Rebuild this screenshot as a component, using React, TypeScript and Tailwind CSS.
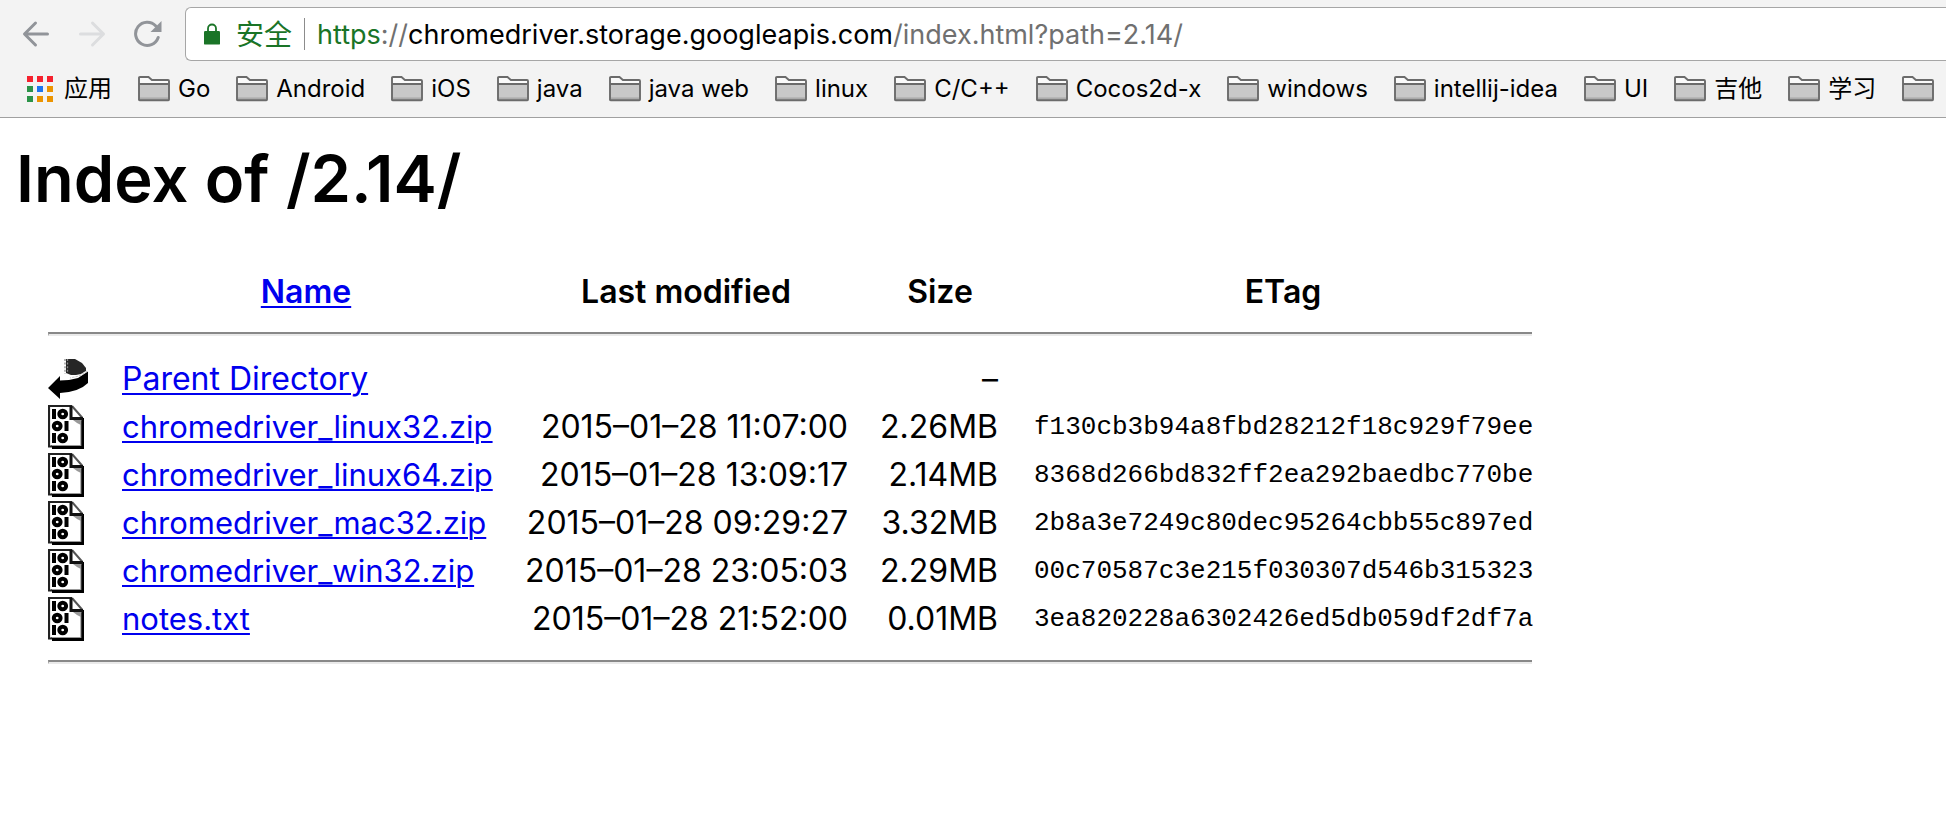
import React from "react";

const bookmarks = ["Go", "Android", "iOS", "java", "java web", "linux", "C/C++", "Cocos2d-x", "windows", "intellij-idea", "UI", "吉他", "学习", ""];

const files = [
  { name: "chromedriver_linux32.zip", modified: "2015–01–28 11:07:00", size: "2.26MB", etag: "f130cb3b94a8fbd28212f18c929f79ee" },
  { name: "chromedriver_linux64.zip", modified: "2015–01–28 13:09:17", size: "2.14MB", etag: "8368d266bd832ff2ea292baedbc770be" },
  { name: "chromedriver_mac32.zip", modified: "2015–01–28 09:29:27", size: "3.32MB", etag: "2b8a3e7249c80dec95264cbb55c897ed" },
  { name: "chromedriver_win32.zip", modified: "2015–01–28 23:05:03", size: "2.29MB", etag: "00c70587c3e215f030307d546b315323" },
  { name: "notes.txt", modified: "2015–01–28 21:52:00", size: "0.01MB", etag: "3ea820228a6302426ed5db059df2df7a" },
];

function BackIcon() {
  return (
    <svg width="28" height="28" viewBox="0 0 28 28" fill="none" stroke="currentColor" strokeWidth="3" strokeLinecap="round" strokeLinejoin="round">
      <path d="M25.500 14H3M13.500 3L2.500 14l11 11" />
    </svg>
  );
}

function ForwardIcon() {
  return (
    <svg width="28" height="28" viewBox="0 0 28 28" fill="none" stroke="currentColor" strokeWidth="3" strokeLinecap="round" strokeLinejoin="round">
      <path d="M2.500 14H25M14.500 3l11 11-11 11" />
    </svg>
  );
}

function ReloadIcon() {
  return (
    <svg width="28" height="28" viewBox="0 0 28 28" fill="none">
      <path d="M24.200 17.500A11.600 11.600 0 1 1 21.800 6" stroke="currentColor" strokeWidth="3" strokeLinecap="round" />
      <path d="M27.500 1v11H16.500z" fill="currentColor" />
    </svg>
  );
}

function LockIcon() {
  return (
    <svg width="16" height="22" viewBox="0 0 16 22" fill="none">
      <path d="M4 9V5.500a4 4 0 0 1 8 0V9" stroke="#1a7427" strokeWidth="1.8" />
      <rect y="8" width="16" height="13.6" rx="1.2" fill="#1a7427" />
    </svg>
  );
}

function AppsIcon() {
  const colors = ["#f5212d", "#f5212d", "#f5212d", "#2b9348", "#1b74f0", "#ec9400", "#2b9348", "#ec9400", "#ec9400"];
  return (
    <svg width="26" height="26" viewBox="0 0 26 26">
      {colors.map((c, i) => (
        <rect key={i} x={(i % 3) * 10} y={Math.floor(i / 3) * 10} width="6" height="6" fill={c} />
      ))}
    </svg>
  );
}

function FolderIcon() {
  return (
    <svg className="shrink-0" width="32" height="26" viewBox="0 0 32 26">
      <path d="M1 24V2.500Q1 1 2.500 1h8l3.400 3H30q1 0 1 1v19q0 1-1 1H2q-1 0-1-1z" fill="#fafafa" />
      <path d="M1 8h30v16q0 1-1 1H2q-1 0-1-1z" fill="#c8c8c8" />
      <path d="M2 21.400h28v2.200H2z" fill="#ababab" />
      <path d="M1 8h30" stroke="#6b6b6b" strokeWidth="2" />
      <path d="M1 24V2Q1 1 2 1h8.500l3.400 3H30q1 0 1 1v18.500q0 .7-.7.7H1.700q-.7 0-.7-.7z" fill="none" stroke="#6b6b6b" strokeWidth="1.9" />
    </svg>
  );
}

function ParentIcon() {
  return (
    <svg className="block" width="40" height="44" viewBox="0 0 40 44">
      <path d="M18 2h9l7 4 4 5v3l-5 3-5 1h-5l-5-2z" fill="#262626" />
      <path d="M17 2v15M19.500 2v15" stroke="#8a8a8a" strokeWidth="1.300" strokeDasharray="2 1.600" />
      <path d="M0 31l12-12v4.500l9-.5 9-2 10-6.500V26q-9 9-28 10v6z" fill="#000" />
      <path d="M39 14l-8 5-9 2" fill="none" stroke="#ccc" strokeWidth="1.200" strokeDasharray="2.500 1" />
    </svg>
  );
}

function BinaryIcon() {
  return (
    <svg className="block" width="36" height="44" viewBox="0 0 36 44">
      <path d="M1 1h22l12 13v29H1z" fill="#fff" />
      <path d="M25 15h8v5l-4-2z" fill="#999" />
      <path d="M3 40.800h30V16" fill="none" stroke="#999" strokeWidth="1.500" />
      <path d="M24 1H1v40.500h3" fill="none" stroke="#222" strokeWidth="2.200" />
      <path d="M4 42.500h30.700V13" fill="none" stroke="#000" strokeWidth="2.800" />
      <path d="M24 1l10.500 12" fill="none" stroke="#555" strokeWidth="2" />
      <path d="M23 1v12.500h12" fill="none" stroke="#111" strokeWidth="3" />
      <path d="M4 4h4v10H4zM16.500 16h4v10h-4zM4 28h4v10H4z" fill="#000" />
      <g fill="none" stroke="#000" strokeWidth="4">
        <ellipse cx="14.700" cy="9" rx="3.400" ry="3.300" />
        <ellipse cx="9.200" cy="21" rx="3.400" ry="3.300" />
        <ellipse cx="14.700" cy="33" rx="3.400" ry="3.300" />
      </g>
    </svg>
  );
}

function Rule() {
  return <hr className="h-1 border-t-2 border-b-2 border-l border-t-[#888888] border-b-[#eaeaea] border-l-[#9a9a9a]" />;
}

const link = "text-[#0000ee] underline decoration-2 underline-offset-3";

export default function App() {
  return (
    <div className="min-h-screen overflow-hidden bg-white font-['Inter','Noto_Sans_CJK_SC',sans-serif] text-black">
      <header className="border-b border-[#a0a0a0] bg-[#f3f3f3]">
        <div className="flex items-center pt-[7px] pl-[22px]">
          <nav className="flex items-center gap-7 text-[#919499]">
            <button type="button" aria-label="Back"><BackIcon /></button>
            <button type="button" aria-label="Forward" disabled className="text-[#dcdddf]"><ForwardIcon /></button>
            <button type="button" aria-label="Reload"><ReloadIcon /></button>
          </nav>
          <div className="ml-[23px] flex h-[54px] flex-1 items-center rounded-l-md border border-r-0 border-[#a6a6a6] bg-white pl-[18px] text-[27px] whitespace-nowrap">
            <LockIcon />
            <span className="ml-4 pt-0.5 text-[28px] text-[#1a7427]">安全</span>
            <span className="mx-3 h-8 w-px bg-[#8c8c8c]" />
            <div role="textbox" aria-label="Address" contentEditable suppressContentEditableWarning className="flex-1 pt-0.5 text-[#707070] outline-none">
              <span className="text-[#1a7427]">https</span>://<span className="text-black">chromedriver.storage.googleapis.com</span>/index.html?path=2.14/
            </div>
          </div>
        </div>
        <nav className="flex h-14 items-center gap-[26px] overflow-hidden pl-[27px] text-[24px] whitespace-nowrap">
          <a href="#apps" className="flex shrink-0 items-center gap-[11px]"><AppsIcon />应用</a>
          {bookmarks.map((b, i) => (
            <a key={i} href="#bookmark" aria-label={b || "More"} className="flex shrink-0 items-center gap-2"><FolderIcon />{b}</a>
          ))}
        </nav>
      </header>

      <main className="px-4 pt-[22px]">
        <h1 className="text-[65px] leading-[78px] font-semibold">Index of /2.14/</h1>
        <table className="mt-[50px] ml-8 w-[1484px] table-fixed border-collapse text-[32px] leading-[48px] whitespace-nowrap">
          <colgroup>
            <col className="w-[74px]" />
            <col className="w-[368px]" />
            <col className="w-[358px]" />
            <col className="w-[150px]" />
            <col className="w-[534px]" />
          </colgroup>
          <thead>
            <tr>
              <td className="p-0" />
              <th className="p-0 font-semibold"><a href="#name" className={link}>Name</a></th>
              <th className="p-0 pl-[34px] font-semibold">Last modified</th>
              <th className="p-0 pl-[34px] font-semibold">Size</th>
              <th className="p-0 pl-9 font-semibold">ETag</th>
            </tr>
            <tr><td colSpan={5} className="pt-4 pb-[19px]"><Rule /></td></tr>
          </thead>
          <tbody>
            <tr className="h-12">
              <td className="p-0"><ParentIcon /></td>
              <td className="p-0"><a href="#parent" className={link}>Parent Directory</a></td>
              <td className="p-0" />
              <td className="p-0 text-right">–</td>
              <td className="p-0" />
            </tr>
            {files.map((f) => (
              <tr key={f.name} className="h-12">
                <td className="p-0"><BinaryIcon /></td>
                <td className="p-0 text-[31px]"><a href="#file" className={link}>{f.name}</a></td>
                <td className="p-0 text-right">{f.modified}</td>
                <td className="p-0 text-right">{f.size}</td>
                <td className="p-0 pl-9 font-['Liberation_Mono',monospace] text-[26px]">{f.etag}</td>
              </tr>
            ))}
            <tr><td colSpan={5} className="pt-[17px]"><Rule /></td></tr>
          </tbody>
        </table>
      </main>
    </div>
  );
}
